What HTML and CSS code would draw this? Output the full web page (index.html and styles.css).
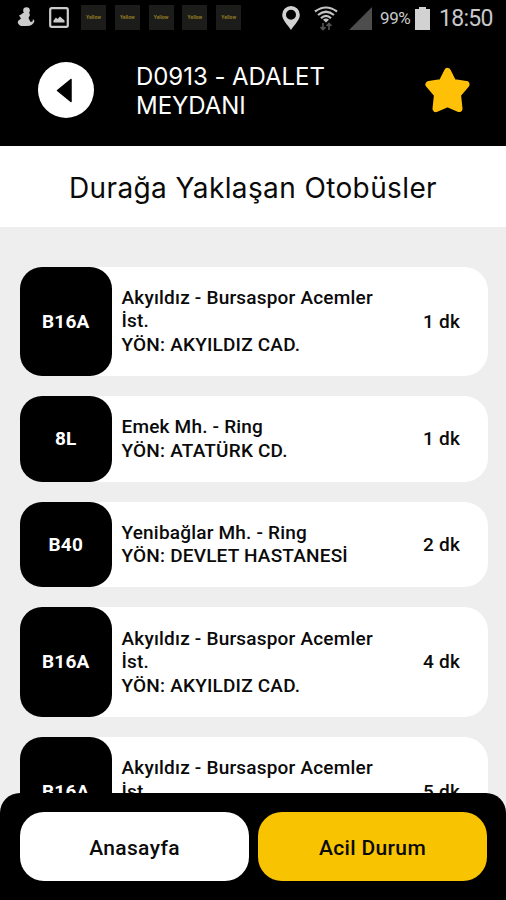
FILE: index.html
```html
<!DOCTYPE html>
<html lang="tr">
<head>
    <title>Durağa Yaklaşan Otobüsler</title>
    <meta charset="UTF-8">
    <meta name="viewport" content="width=device-width, initial-scale=1.0">
    <link rel="stylesheet" href="styles.css">
</head>
<body>
    <div class="status-bar">
        <div class="status-left">
            <svg class="person" width="18" height="22" viewBox="0 0 18 22">
                <circle cx="9.500" cy="4.500" r="3.300" fill="#ccc"/>
                <path d="M6 7L12 6.500L13 9L11.500 12L13.500 16L15.500 15.500L16 13L17.500 15Q16 20 10 20L4 20Q0 18 1 15L4 12.500L2 9.500L4 8.500Z" fill="#ccc"/>
            </svg>
            <svg class="photo" width="20" height="21" viewBox="0 0 20 21">
                <rect x="1.200" y="1.200" width="17.600" height="18.600" rx="1.500" fill="none" stroke="#ccc" stroke-width="2.200"/>
                <path d="M4.500 15.500V13.500L7 10.500L8.500 12L11 9.500L15.500 13.500V15.500Z" fill="#ccc"/>
            </svg>
            <span class="notif">Yellow</span>
            <span class="notif">Yellow</span>
            <span class="notif">Yellow</span>
            <span class="notif">Yellow</span>
            <span class="notif">Yellow</span>
        </div>
        <div class="status-right">
            <svg class="pin" width="18" height="24" viewBox="0 0 18 24">
                <path d="M9 0A8.800 8.800 0 0 0 .2 8.800C.2 14 5 18 9 24C13 18 17.800 14 17.800 8.800A8.800 8.800 0 0 0 9 0ZM9 3.800A5 5 0 1 1 9 13.800A5 5 0 1 1 9 3.800Z" fill="#d2d2d2" fill-rule="evenodd"/>
            </svg>
            <svg class="wifi" width="24" height="25" viewBox="0 0 24 25">
                <g fill="none" stroke="#c4c4c4" stroke-width="2.200">
                    <path d="M1 5.500Q12-2.500 23 5.500"/>
                    <path d="M4 9Q12 2.500 20 9"/>
                    <path d="M7 12.300Q12 7.500 17 12.300"/>
                </g>
                <path d="M9 13.700Q12 11.500 15 13.700L12 16.500Z" fill="#c4c4c4"/>
                <path d="M9 17V23M6.500 21L9 23.500L11.500 21M15 24V18M12.500 20L15 17.500L17.500 20" fill="none" stroke="#555" stroke-width="1.600"/>
            </svg>
            <svg class="signal" width="23" height="23" viewBox="0 0 23 23">
                <path d="M23 0V23H0Z" fill="#4d4d4d"/>
            </svg>
            <span class="percent">99%</span>
            <svg class="battery" width="15" height="23" viewBox="0 0 15 23">
                <path d="M4 0H11V2H15V23H0V2H4Z" fill="#d2d2d2"/>
            </svg>
            <span class="clock">18:50</span>
        </div>
    </div>

    <header class="header">
        <button class="btn-back" aria-label="Geri">
            <svg width="16" height="25" viewBox="0 0 16 25">
                <path d="M15 1.500V23.500L1.500 12.500Z" fill="#000" stroke="#000" stroke-width="1.500" stroke-linejoin="round"/>
            </svg>
        </button>
        <div class="stop-name">D0913 - ADALET MEYDANI</div>
        <svg class="star" width="46" height="46" viewBox="0 0 46 46">
            <path d="M22.500 4.500L28 15.500L41 17.500L32.500 27.500L34 41.500L22.500 36.500L11 41.500L12.500 27.500L4 17.500L17 15.500Z" fill="#ffc107" stroke="#ffc107" stroke-width="7" stroke-linejoin="round"/>
        </svg>
    </header>

    <h1 class="title">Durağa Yaklaşan Otobüsler</h1>

    <main class="list">
        <div class="card">
            <div class="line">B16A</div>
            <div class="route">Akyıldız - Bursaspor Acemler İst.<br>YÖN: AKYILDIZ CAD.</div>
            <div class="time">1 dk</div>
        </div>
        <div class="card">
            <div class="line">8L</div>
            <div class="route">Emek Mh. - Ring<br>YÖN: ATATÜRK CD.</div>
            <div class="time">1 dk</div>
        </div>
        <div class="card">
            <div class="line">B40</div>
            <div class="route">Yenibağlar Mh. - Ring<br>YÖN: DEVLET HASTANESİ</div>
            <div class="time">2 dk</div>
        </div>
        <div class="card">
            <div class="line">B16A</div>
            <div class="route">Akyıldız - Bursaspor Acemler İst.<br>YÖN: AKYILDIZ CAD.</div>
            <div class="time">4 dk</div>
        </div>
        <div class="card">
            <div class="line">B16A</div>
            <div class="route">Akyıldız - Bursaspor Acemler İst.<br>YÖN: AKYILDIZ CAD.</div>
            <div class="time">5 dk</div>
        </div>
    </main>

    <nav class="bottom-bar">
        <button class="btn btn-home">Anasayfa</button>
        <button class="btn btn-emergency">Acil Durum</button>
    </nav>
</body>
</html>
```

FILE: styles.css
```css
* {
    box-sizing: border-box;
}

body {
    margin: 0;
    height: 100vh;
    overflow: hidden;
    display: flex;
    flex-direction: column;
    background-color: #eee;
    font-family: Roboto, sans-serif;
    color: #0a0a0a;
}

.status-bar {
    flex: none;
    display: flex;
    justify-content: space-between;
    height: 36px;
    padding: 0 13px 0 17px;
    background-color: #000;
    color: #c8c8c8;
}

.status-left, .status-right {
    display: flex;
    align-items: center;
}

.status-left {
    padding-bottom: 2px;
}

.photo {
    margin-left: 14px;
    margin-right: 12px;
}

.notif {
    width: 25px;
    height: 25px;
    margin-right: 8.8px;
    background-color: #1c1c1a;
    color: #8f7a26;
    font-size: 5px;
    font-weight: bold;
    line-height: 25px;
    text-align: center;
}

.wifi { margin-left: 14px; }
.signal { margin-left: 11px; }

.percent {
    width: 31px;
    margin-left: 8px;
    font-size: 17px;
    letter-spacing: -0.4px;
}

.battery { margin-left: 4px; }

.clock {
    width: 54px;
    margin-left: 9px;
    font-size: 23px;
    letter-spacing: -0.7px;
}

.header {
    flex: none;
    display: flex;
    align-items: center;
    height: 110px;
    padding: 0 35px 2px 38px;
    background-color: #000;
    color: #fff;
}

.btn-back {
    display: flex;
    align-items: center;
    justify-content: center;
    width: 56px;
    height: 56px;
    padding: 0 5px 0 0;
    border: none;
    border-radius: 50%;
    background-color: #fff;
}

.stop-name {
    width: 230px;
    margin-left: 42px;
    padding-top: 2px;
    font-family: Inter, sans-serif;
    font-size: 24px;
    line-height: 29px;
    letter-spacing: -0.05px;
}

.star {
    margin-left: auto;
}

.title {
    flex: none;
    height: 81px;
    margin: 0;
    background-color: #fff;
    font-family: Inter, sans-serif;
    font-size: 28px;
    font-weight: 400;
    line-height: 84px;
    letter-spacing: 0.38px;
    text-align: center;
}

.list {
    flex: 1;
    display: flex;
    flex-direction: column;
    gap: 20px;
    min-height: 0;
    padding: 39.5px 18.5px 0 20px;
}

.card {
    flex: none;
    display: flex;
    background-color: #fff;
    border-radius: 24px;
}

.line {
    display: flex;
    align-items: center;
    justify-content: center;
    width: 91.5px;
    background-color: #000;
    border-radius: 22px;
    color: #fff;
    font-size: 19px;
    font-weight: 700;
    letter-spacing: 0.2px;
}

.route {
    width: 264px;
    margin-left: 10px;
    padding: 19.4px 0;
    font-size: 19px;
    font-weight: 500;
    line-height: 23.5px;
    letter-spacing: 0.2px;
}

.time {
    flex: 1;
    align-self: center;
    padding-right: 27.5px;
    font-size: 19px;
    font-weight: 500;
    letter-spacing: 0.2px;
    text-align: right;
}

.bottom-bar {
    position: fixed;
    left: 0;
    right: 0;
    bottom: 0;
    display: flex;
    gap: 9px;
    height: 107.5px;
    padding: 19px 19px 19px 20px;
    background-color: #000;
    border-radius: 20px 20px 0 0;
}

.btn {
    flex: 1;
    padding: 3px 0 0;
    border: none;
    border-radius: 24px;
    font-family: Roboto, sans-serif;
    font-size: 21px;
    font-weight: 500;
    letter-spacing: 0.35px;
    color: #0a0a0a;
}

.btn-home { background-color: #fff; }
.btn-emergency { background-color: #f8c300; }
```
